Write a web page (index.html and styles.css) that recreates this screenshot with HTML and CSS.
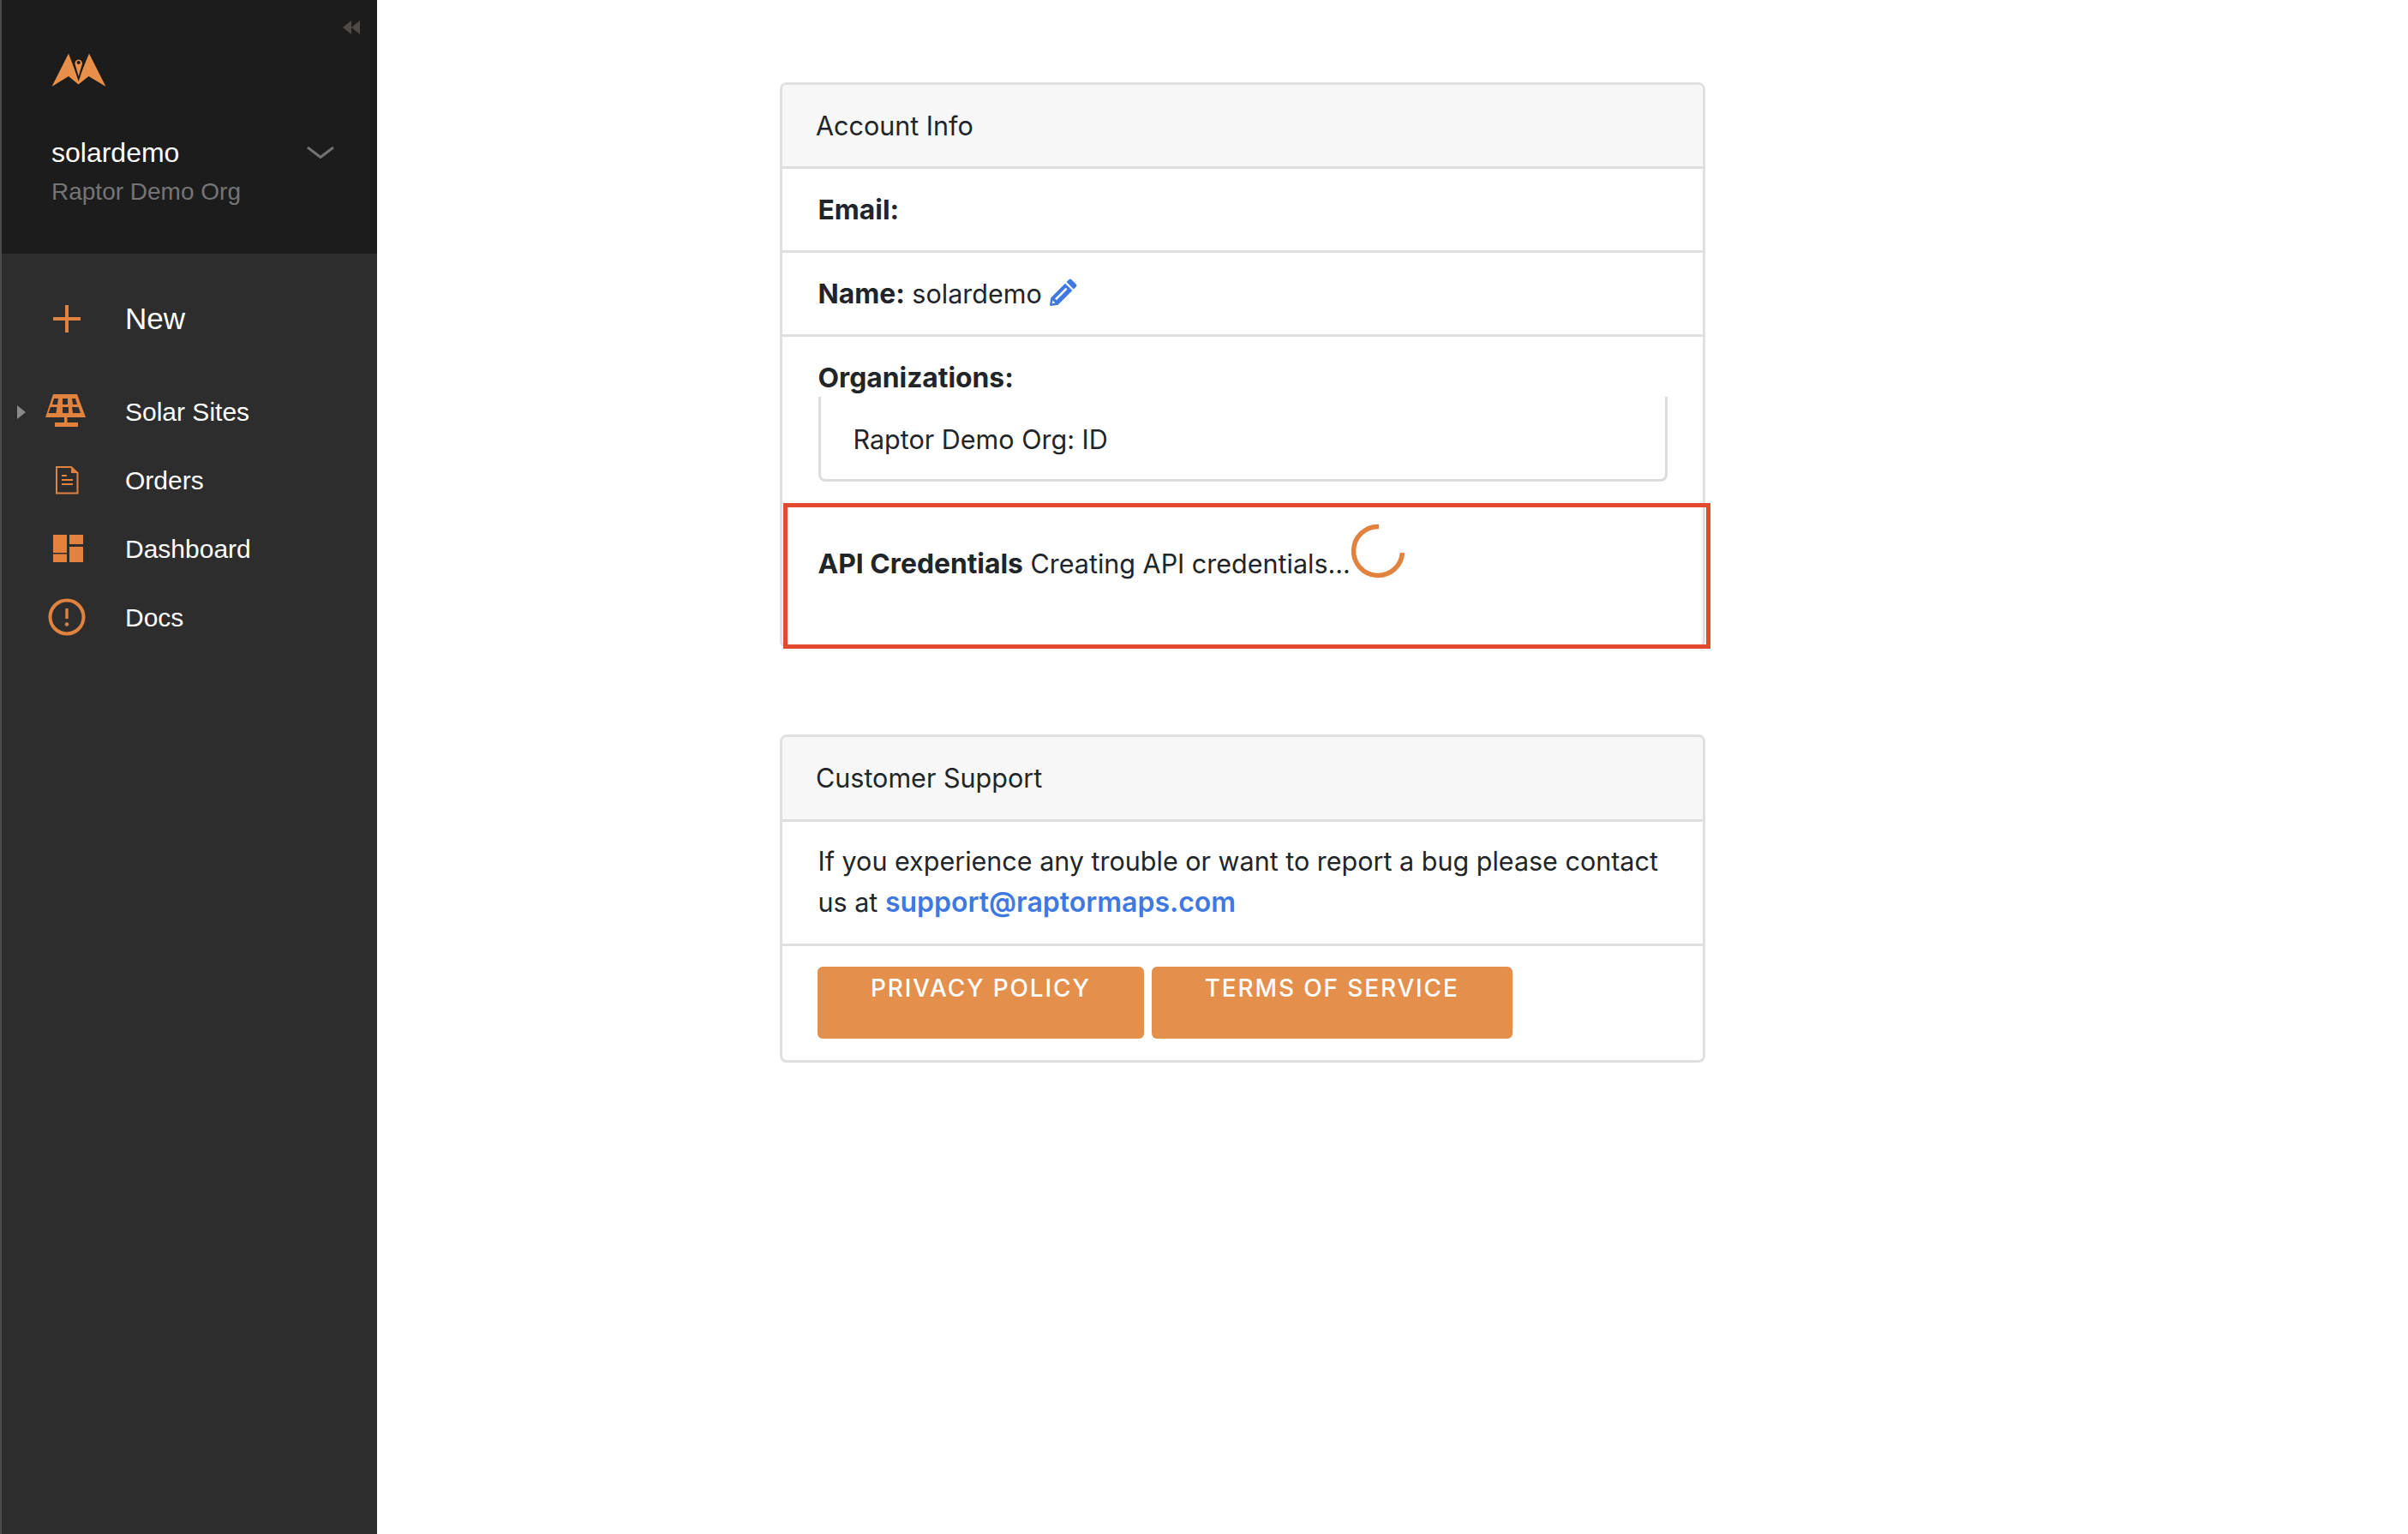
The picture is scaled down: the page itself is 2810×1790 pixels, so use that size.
FILE: index.html
```html
<!DOCTYPE html>
<html lang="en">
<head>
<meta charset="utf-8">
<title>Account</title>
<link rel="stylesheet" href="styles.css">
</head>
<body>
<div class="app">
  <aside class="sidebar">
    <header class="side-head">
      <div class="collapse-row">
        <svg class="collapse" viewBox="0 0 20 16"><path d="M10 0v16L0 8zM20 0v16L10 8z"/></svg>
      </div>
      <svg class="logo" viewBox="0 0 64 40">
        <path class="logo-body" d="M20 0.5 0.5 39 20 27 31.500 36.500 43.500 27 63.500 39 44 0.5 31.500 30.500z"/>
        <path class="logo-pin" d="M31.700 33 25.500 14a6.600 6.600 0 1 1 12.400 0z"/>
        <path class="logo-body" d="M31.700 27 27.700 13.500a4.300 4.300 0 1 1 8 0z"/>
        <circle class="logo-pin-in" cx="31.700" cy="11" r="2.100"/>
      </svg>
      <div class="user-row">
        <div class="user-text">
          <div class="user-name">solardemo</div>
          <div class="user-org">Raptor Demo Org</div>
        </div>
        <svg class="chevron" viewBox="0 0 32 14"><path d="M1 1 16 12.5 31 1"/></svg>
      </div>
    </header>
    <nav class="side-nav">
      <a class="nav-item nav-new">
        <span class="caret-slot"></span>
        <svg class="nav-icon" viewBox="0 0 56 56"><path class="ln" d="M28 12v32M12 28h32"/></svg>
        <span class="nav-label">New</span>
      </a>
      <a class="nav-item">
        <span class="caret-slot"><svg class="caret" viewBox="0 0 10 16"><path d="M0 0 10 8 0 16z"/></svg></span>
        <svg class="nav-icon" viewBox="0 0 56 56">
          <path class="fill" fill-rule="evenodd" d="M12 8h28l10 27H3zM13 13l-2 7h6l1-7zM23 13v7h6v-7zM34 13l1 7h5l-2-7zM9 23l-2.500 7h9l1-7zM23 23v7h7v-7zM34 23l1 7h9l-2.500-7z"/>
          <path class="fill" d="M25 34h3.500v7H41v5H14v-5h11z"/>
        </svg>
        <span class="nav-label">Solar Sites</span>
      </a>
      <a class="nav-item">
        <span class="caret-slot"></span>
        <svg class="nav-icon" viewBox="0 0 56 56">
          <path class="ln thin" d="M16 13h17l7.500 7v23.500H16z"/>
          <path class="fill" d="M33 12l8.500 8H33z"/>
          <path class="ln thin" d="M22 23h6M22 28h13M22 33h13"/>
        </svg>
        <span class="nav-label">Orders</span>
      </a>
      <a class="nav-item">
        <span class="caret-slot"></span>
        <svg class="nav-icon" viewBox="0 0 56 56">
          <path class="fill" d="M12 12h16v21H12zM12 34.500h16V44H12zM31 12h16v11H31zM31 26h16v18H31z"/>
        </svg>
        <span class="nav-label">Dashboard</span>
      </a>
      <a class="nav-item">
        <span class="caret-slot"></span>
        <svg class="nav-icon" viewBox="0 0 56 56">
          <circle class="ln" cx="28" cy="28" r="19.500"/>
          <path class="fill" d="M26.300 18h3.400v12h-3.400z"/>
          <circle class="fill" cx="28" cy="36.500" r="2.200"/>
        </svg>
        <span class="nav-label">Docs</span>
      </a>
    </nav>
  </aside>

  <main class="content">
    <section class="card card-account">
      <h2 class="card-head">Account Info</h2>
      <div class="row"><b>Email:</b></div>
      <div class="row"><b>Name:</b> solardemo
        <svg class="pencil" viewBox="0 0 32 32">
          <path d="M25.300 1.200 30.800 6.700a2 2 0 0 1 0 2.800l-2.900 2.900-8.300-8.300 2.900-2.900a2 2 0 0 1 2.800 0z"/>
          <path fill-rule="evenodd" d="M18 5.700 26.300 14 9.600 30.700 0.800 32 0 31.200 1.300 22.400zM6 23.500 7.800 25.300 20.500 12.600 18.700 10.800zM3.500 25.500 2.700 29.300 6.500 28.500z"/>
        </svg>
      </div>
      <div class="row row-orgs">
        <b>Organizations:</b>
        <div class="org-box">Raptor Demo Org: ID</div>
      </div>
      <div class="row row-api">
        <b>API Credentials</b> Creating API credentials...<svg class="spinner" viewBox="0 0 66 66"><path d="M60.500 35A28.500 28.500 0 1 1 33 4.500"/></svg>
        <div class="annotation"></div>
      </div>
    </section>

    <section class="card card-support">
      <h2 class="card-head">Customer Support</h2>
      <div class="row row-text">If you experience any trouble or want to report a bug please contact us at <a class="mail">support@raptormaps.com</a></div>
      <div class="row row-buttons">
        <a class="btn">PRIVACY POLICY</a>
        <a class="btn">TERMS OF SERVICE</a>
      </div>
    </section>
  </main>
</div>
</body>
</html>
```
FILE: styles.css
```css
* { box-sizing: border-box; }
html, body { margin: 0; height: 100%; background: #fff; }
body { font-family: Inter, "Liberation Sans", sans-serif; color: #212529; font-size: 30.500px; line-height: 48px; }
.app { display: flex; min-height: 1790px; }

.sidebar { width: 440px; flex: none; background: #2d2d2d; border-left: 2px solid #4d4b4a; font-family: "Liberation Sans", Arial, sans-serif; color: #fff; }
.side-head { height: 296px; margin-left: -2px; padding-left: 2px; background: #1c1c1c; border-left: 2px solid #4d4b4a; display: flex; flex-direction: column; }
.collapse-row { display: flex; justify-content: flex-end; padding: 24px 20px 0 0; height: 62px; }
.collapse { width: 20px; height: 16px; fill: #4f4a46; }
.logo { width: 64px; height: 40px; margin-left: 56px; flex: none; }
.logo-body { fill: #e89049; }
.logo-pin { fill: #1c1c1c; }
.logo-pin-in { fill: #1c1c1c; }
.user-row { display: flex; align-items: flex-start; margin-top: 54px; padding-left: 56px; }
.user-text { width: 298px; }
.user-name { font-size: 32px; line-height: 44px; }
.user-org { font-size: 28px; line-height: 47px; color: #757575; }
.chevron { width: 32px; height: 14px; margin-top: 15px; fill: none; stroke: #737373; stroke-width: 3; }

.side-nav { display: flex; flex-direction: column; padding-top: 36px; }
.nav-item { display: flex; align-items: center; height: 80px; font-size: 30px; line-height: 40px; color: #fff; }
.nav-new { margin-bottom: 28px; font-size: 35px; }
.caret-slot { width: 48px; padding-left: 18px; display: flex; flex: none; }
.caret { width: 10px; height: 16px; fill: #8a8a8a; margin-top: 2px; }
.nav-icon { width: 56px; height: 56px; flex: none; }
.nav-label { margin-left: 40px; padding-top: 2px; }
.nav-new .nav-label { padding-top: 0; }
.ln { fill: none; stroke: #e2823f; stroke-width: 4; }
.ln.thin { stroke-width: 2; }
.fill { fill: #e2823f; }

.content { flex: 1; padding: 96px 0 0 470px; }
.card { width: 1080px; border: 3px solid #dfe1e0; border-radius: 8px; }
.card-account { height: 660px; }
.card-support { margin-top: 101px; height: 383px; }
.card-head { margin: 0; height: 98px; padding: 24px 39px 0; font-weight: 400; font-size: 30.500px; line-height: 48px; background: #f6f7f6; border-bottom: 3px solid #dddfde; border-radius: 5px 5px 0 0; }
.card-support .card-head { height: 99px; }
.row { padding: 24px 41px 0 41.500px; height: 98px; border-bottom: 3px solid #e0e0e0; }
.row b { font-weight: 700; font-size: 31.800px; }
.pencil { width: 32px; height: 32px; fill: #3f78e0; vertical-align: -3px; margin-left: 1px; }
.row-orgs { height: 194px; border-bottom: 0; padding-top: 24px; }
.org-box { height: 99px; padding: 26px 38px 0; margin-top: -2px; border: 3px solid #dcdcdc; border-top: 0; border-radius: 0 0 8px 8px; }
.row-api { position: relative; height: 164px; border-bottom: 0; padding-top: 23px; }
.spinner { width: 66px; height: 66px; vertical-align: -7px; fill: none; stroke: #e2823f; stroke-width: 5.500; }
.annotation { position: absolute; top: 0; left: 1px; right: -9px; height: 170px; border: 5px solid #e2492f; }
.row-text { height: 145px; padding-top: 22px; }
.mail { color: #3f78e0; font-weight: 600; font-size: 32px; }
.row-buttons { height: auto; border-bottom: 0; display: flex; gap: 9px; padding: 24px 41px 0; }
.btn { height: 84px; padding: 5px 62px 0; border-radius: 6px; background: #e48f4c; color: #fff; font-size: 28px; line-height: 40px; font-weight: 500; letter-spacing: 1.850px; white-space: nowrap; }
```
